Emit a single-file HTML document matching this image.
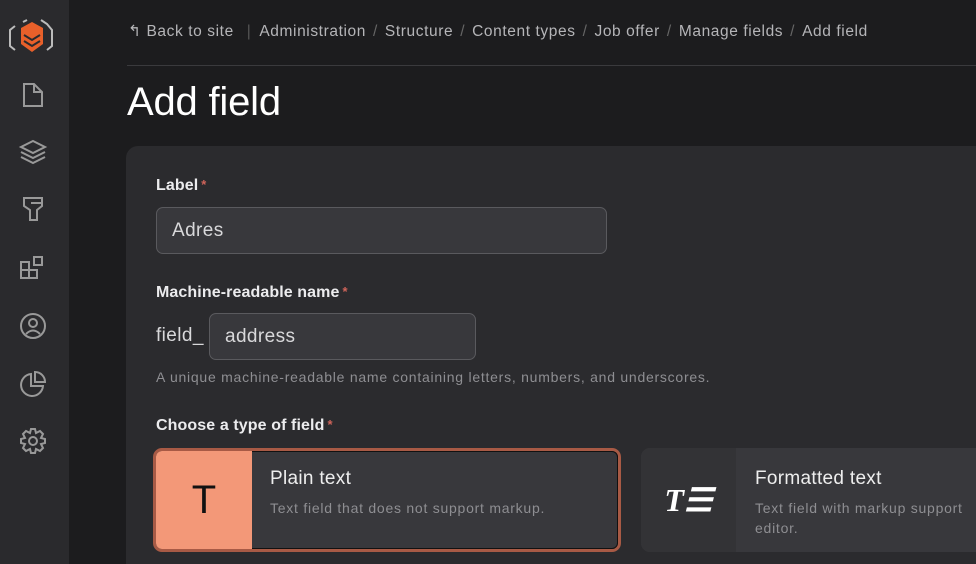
<!DOCTYPE html>
<html><head><meta charset="utf-8"><style>
*{margin:0;padding:0;box-sizing:border-box}
html,body{width:976px;height:564px;overflow:hidden}
body{background:#1c1c1e;font-family:"Liberation Sans",sans-serif;color:#e8e8ea;position:relative}
.side{position:absolute;left:0;top:0;width:69px;height:564px;background:#2a2a2d}
.side svg{position:absolute;left:18px}
.bc{position:absolute;top:22px;left:128px;font-size:15.5px;color:#b5b5b8;white-space:nowrap;letter-spacing:0.6px}
.bc span{margin:0 7px;color:#666}
.hr{position:absolute;left:127px;right:0;top:65px;height:1px;background:#3a3a3d}
h1{position:absolute;left:127px;top:80px;font-size:40px;font-weight:500;color:#fff;letter-spacing:-0.2px}
.card{position:absolute;left:126px;top:146px;width:870px;height:418px;background:#2b2b2e;border-radius:12px 0 0 0}
.lbl{position:absolute;left:156px;font-size:16px;font-weight:bold;color:#ececee;letter-spacing:0.1px}
.lbl i{color:#d0645a;font-style:normal;font-size:13px;vertical-align:top;margin-left:3px}
.inp{position:absolute;background:#38383c;border:1px solid #5a5a5e;border-radius:7px;font-size:19px;color:#d8d8da;padding-left:15px;display:flex;align-items:center;letter-spacing:0.4px}
.opt{position:absolute;top:448px;height:104px;background:#38383c;border-radius:9px;overflow:hidden}
.d{font-size:14px;color:#8e8e92;letter-spacing:0.75px}
</style></head><body>
<div class="side">
<svg style="top:18px;left:7px" width="50" height="40" viewBox="0 0 50 40"><path d="M8 8 L3 12 V28 L8 32 M16 4 L20 2 M34 2 L40 6 L45 12 V28 L40 32" stroke="#bbb" stroke-width="2" fill="none"/><path d="M25 4 L36 10 V26 L25 34 L14 26 V10Z" fill="#e8602a"/><path d="M17 17 L25 22 L33 17 M17 23 L25 28 L33 23" stroke="#2a2a2d" stroke-width="2" fill="none"/></svg>
<svg style="top:82px" width="30" height="26" viewBox="0 0 30 26" fill="none" stroke="#999" stroke-width="2"><path d="M6 2 H16 L24 10 V24 H6Z M16 2 V10 H24"/></svg>
<svg style="top:139px" width="30" height="28" viewBox="0 0 30 28" fill="none" stroke="#999" stroke-width="2"><path d="M15 2 L27 8 L15 14 L3 8Z M3 13 L15 19 L27 13 M3 18 L15 24 L27 18"/></svg>
<svg style="top:196px" width="30" height="28" viewBox="0 0 30 28" fill="none" stroke="#999" stroke-width="2"><path d="M6 2 H24 V10 L19 14 V24 H12 V14 L6 10Z M13 7 H24"/></svg>
<svg style="top:254px" width="30" height="28" viewBox="0 0 30 28" fill="none" stroke="#999" stroke-width="2"><path d="M3 8 H11 V24 H3Z M3 16 H19 V24 H11 M16 3 H24 V11 H16Z"/></svg>
<svg style="top:312px" width="30" height="28" viewBox="0 0 30 28" fill="none" stroke="#999" stroke-width="2"><circle cx="15" cy="14" r="12"/><circle cx="15" cy="11" r="4"/><path d="M8 22 Q15 15 22 22"/></svg>
<svg style="top:370px" width="30" height="28" viewBox="0 0 30 28" fill="none" stroke="#999" stroke-width="2"><path d="M13 4 A11 11 0 1 0 25 16 H13Z M17 2 A10 10 0 0 1 27 12 H17Z"/></svg>
<svg style="top:427px" width="30" height="28" viewBox="0 0 30 28" fill="none" stroke="#999" stroke-width="2"><circle cx="15" cy="14" r="4"/><path d="M13 2 H17 L18 6 L22 4 L25 7 L23 11 L27 12 V16 L23 17 L25 21 L22 24 L18 22 L17 26 H13 L12 22 L8 24 L5 21 L7 17 L3 16 V12 L7 11 L5 7 L8 4 L12 6Z"/></svg>
</div>
<div class="bc">↰ Back to site <span style="color:#555;margin:0 8px">|</span>Administration<span>/</span>Structure<span>/</span>Content types<span>/</span>Job offer<span>/</span>Manage fields<span>/</span>Add field</div>
<div class="hr"></div>
<h1>Add field</h1>
<div class="card"></div>
<div class="lbl" style="top:177px">Label<i>*</i></div>
<div class="inp" style="left:156px;top:207px;width:451px;height:47px">Adres</div>
<div class="lbl" style="top:284px">Machine-readable name<i>*</i></div>
<div style="position:absolute;left:156px;top:325px;font-size:19px;color:#d8d8da;letter-spacing:0.4px">field_</div>
<div class="inp" style="left:209px;top:313px;width:267px;height:47px">address</div>
<div class="d" style="position:absolute;left:156px;top:369px">A unique machine-readable name containing letters, numbers, and underscores.</div>
<div class="lbl" style="top:417px">Choose a type of field<i>*</i></div>
<div class="opt" style="left:153px;width:468px;border:3px solid #a85a45;outline:1px solid #111;outline-offset:-4px"><div style="position:absolute;left:0;top:0;width:96px;height:100%;background:#f39878;color:#111;font-size:40px;display:flex;align-items:center;justify-content:center">T</div><div style="position:absolute;left:114px;top:17px;font-size:19px;color:#eee;letter-spacing:0.3px">Plain text</div><div class="d" style="position:absolute;left:114px;top:49px">Text field that does not support markup.</div></div>
<div class="opt" style="left:641px;width:360px"><div style="position:absolute;left:0;top:0;width:95px;height:100%;background:#333336;color:#fff;font-size:32px;font-weight:bold;font-style:italic;font-family:'Liberation Serif',serif;display:flex;align-items:center;justify-content:center">T☰</div><div style="position:absolute;left:114px;top:20px;font-size:19px;color:#eee;letter-spacing:0.3px">Formatted text</div><div class="d" style="position:absolute;left:114px;top:50px;line-height:20px">Text field with markup support<br>editor.</div></div>
</body></html>
